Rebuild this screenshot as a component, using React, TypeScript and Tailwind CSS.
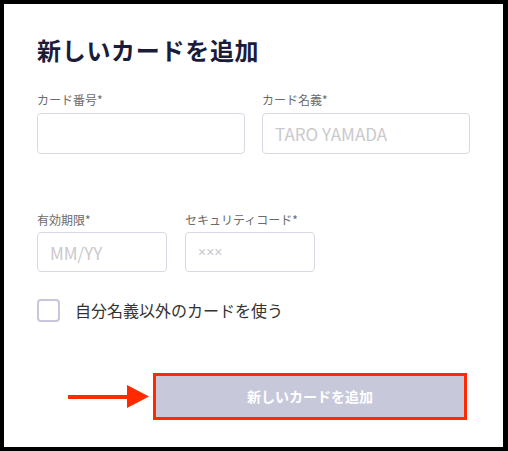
const font = { fontFamily: '"Noto Sans CJK JP", "Noto Sans", sans-serif' };

const Label = ({ text }: { text: string }) => (
  <div className="text-[12px] leading-[16px] text-[#6b6b6b]">{text}</div>
);

const App = () => {
  return (
    <div className="w-[508px] h-[451px] bg-black pt-[4px] pl-[4px] pr-[5px] pb-[4px]" style={font}>
      <div className="h-full bg-white pl-[33px] pr-[33px] pt-[30px]">
        <h1 className="text-[24px] leading-[32px] font-bold text-[#1b1b3a] tracking-[0.7px]">
          新しいカードを追加
        </h1>

        {/* カード番号 / 名義 */}
        <div className="mt-[26px] grid grid-cols-[208px_208px] gap-x-[17px]">
          <div>
            <Label text="カード番号*" />
            <input
              className="mt-[5px] w-full h-[41px] rounded-[4px] border border-[#d9d9e6] px-[12px] text-[17px] outline-none"
            />
          </div>
          <div>
            <Label text="カード名義*" />
            <input
              placeholder="TARO YAMADA"
              className="mt-[5px] w-full h-[41px] rounded-[4px] border border-[#d9d9e6] px-[12px] text-[17px] outline-none placeholder:text-[#c9c9cc]"
            />
          </div>
        </div>

        {/* 有効期限 / セキュリティコード */}
        <div className="mt-[58px] flex gap-[18px]">
          <div className="w-[130px]">
            <Label text="有効期限*" />
            <input
              placeholder="MM/YY"
              className="mt-[4px] w-full h-[40px] rounded-[4px] border border-[#d9d9e6] px-[12px] text-[17px] outline-none placeholder:text-[#c9c9cc]"
            />
          </div>
          <div className="w-[130px]">
            <Label text="セキュリティコード*" />
            <input
              placeholder="×××"
              className="mt-[4px] w-full h-[40px] rounded-[4px] border border-[#d9d9e6] px-[12px] text-[14px] font-['Liberation_Sans',sans-serif] outline-none placeholder:text-[#c9c9cc]"
            />
          </div>
        </div>

        {/* checkbox */}
        <label className="mt-[26px] flex items-center">
          <span className="w-[23px] h-[23px] rounded-[4px] border-2 border-[#c6c6dc] bg-white" />
          <span className="ml-[15px] text-[16px] text-[#333333]">自分名義以外のカードを使う</span>
        </label>

        {/* submit */}
        <div className="mt-[51px] flex items-center">
          <div className="ml-[31px] flex items-center">
            <div className="w-[60px] h-[4px] bg-[#ff2a00]" />
            <svg width="22" height="23" viewBox="0 0 22 23" className="-ml-[1px]">
              <polygon points="0,0 22,11.5 0,23" fill="#ff2a00" />
            </svg>
          </div>
          <div className="ml-[4px] w-[314px] h-[47px] border-[3px] border-[#ff2a00]">
            <button className="w-full h-full bg-[#c8c8db] text-white text-[14px] font-bold">
              新しいカードを追加
            </button>
          </div>
        </div>
      </div>
    </div>
  );
};

export default App;
